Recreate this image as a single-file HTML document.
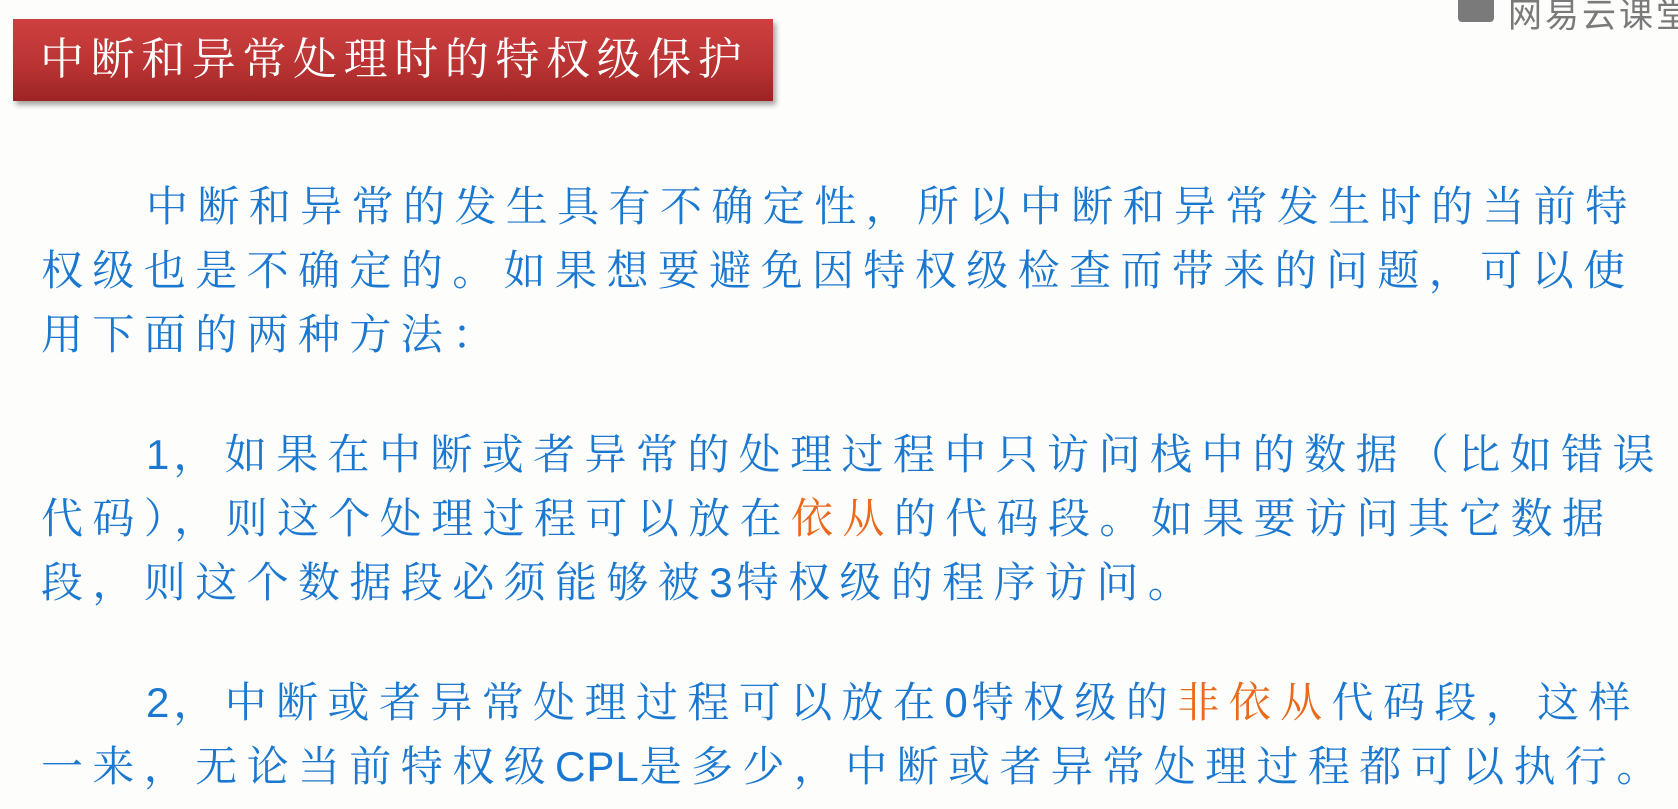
<!DOCTYPE html>
<html><head><meta charset="utf-8"><style>
html,body{margin:0;padding:0;width:1678px;height:809px;overflow:hidden;background:#fdfdfb;}
.banner{position:absolute;left:13px;top:19px;width:760px;height:82px;background:linear-gradient(#cf4040,#b83232 60%,#9c2424);box-shadow:3px 4px 5px rgba(0,0,0,0.35);}
.title{position:absolute;left:40px;top:19px;color:#fff;font:44px "Liberation Serif","Noto Serif CJK SC",serif;letter-spacing:6.6px;line-height:82px;white-space:nowrap;}
.l{position:absolute;color:#1b78d0;font-family:"Liberation Sans","Noto Serif CJK SC",serif;font-size:42px;letter-spacing:9.4px;line-height:64px;white-space:nowrap;}
.o{color:#ea6a1c;}
.n{letter-spacing:4px;}
.c{letter-spacing:1px;}
.logo{position:absolute;left:1508px;top:-12px;color:#7a7a7a;font:34px "Noto Sans CJK SC",sans-serif;letter-spacing:3px;white-space:nowrap;}
.icon{position:absolute;left:1458px;top:-6px;width:36px;height:28px;background:#7a7a7a;border-radius:0 0 4px 4px;}
</style></head><body>
<div class="icon"></div>
<div class="logo">网易云课堂</div>
<div class="banner"></div>
<div class="title">中断和异常处理时的特权级保护</div>
<div class="l" style="left:146px;top:175px">中断和异常的发生具有不确定性，所以中断和异常发生时的当前特</div>
<div class="l" style="left:41px;top:239px">权级也是不确定的。如果想要避免因特权级检查而带来的问题，可以使</div>
<div class="l" style="left:41px;top:303px">用下面的两种方法：</div>
<div class="l" style="left:146px;top:423px"><span class="n">1</span>，如果在中断或者异常的处理过程中只访问栈中的数据（比如错误</div>
<div class="l" style="left:41px;top:487px">代码），则这个处理过程可以放在<span class="o">依从</span>的代码段。如果要访问其它数据</div>
<div class="l" style="left:41px;top:551px">段，则这个数据段必须能够被<span class="n">3</span>特权级的程序访问。</div>
<div class="l" style="left:146px;top:671px"><span class="n">2</span>，中断或者异常处理过程可以放在<span class="n">0</span>特权级的<span class="o">非依从</span>代码段，这样</div>
<div class="l" style="left:41px;top:735px">一来，无论当前特权级<span class="c">CPL</span>是多少，中断或者异常处理过程都可以执行。</div>
</body></html>
